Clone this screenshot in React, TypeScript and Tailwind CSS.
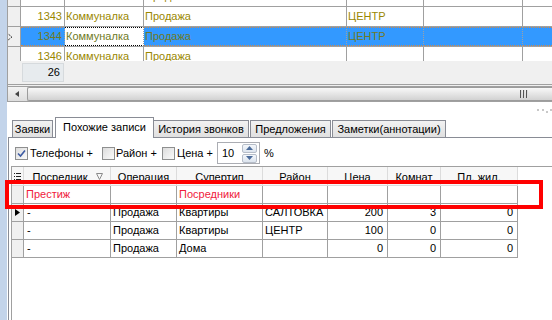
import React from "react";

const LINE = "border-[#a0a0a0]";

const TOP_ROWS = [
  { num: "", op: "Продажа", kind: "", area: "", partial: true },
  { num: "1343", kind: "Коммуналка", op: "Продажа", area: "ЦЕНТР" },
  { num: "1344", kind: "Коммуналка", op: "Продажа", area: "ЦЕНТР", selected: true },
  { num: "1346", kind: "Коммуналка", op: "Продажа", area: "" },
];

const COLS = [
  { w: "w-[87px]", title: "Посредник", right: false },
  { w: "w-[66px]", title: "Операция", right: false },
  { w: "w-[86px]", title: "Супертип", right: false },
  { w: "w-[65px]", title: "Район", right: false },
  { w: "w-[60px]", title: "Цена", right: true },
  { w: "w-[53px]", title: "Комнат", right: true },
  { w: "w-[77px]", title: "Пл. жил.", right: true },
];

const ROWS = [
  { red: true, cells: ["Престиж", "", "Посредники", "", "", "", ""] },
  { current: true, cells: ["-", "Продажа", "Квартиры", "САЛТОВКА", "200", "3", "0"] },
  { cells: ["-", "Продажа", "Квартиры", "ЦЕНТР", "100", "0", "0"] },
  { cells: ["-", "Продажа", "Дома", "", "0", "0", "0"] },
];

const TABS = [
  { label: "Заявки", cls: "ml-[5px] w-[41px]" },
  { label: "Похожие записи", cls: "ml-[2px] w-[99px]", active: true },
  { label: "История звонков", cls: "w-[95px] border-l-0" },
  { label: "Предложения", cls: "ml-[1px] w-[81px]" },
  { label: "Заметки(аннотации)", cls: "ml-[1px] w-[114px]" },
];

function TopRow({ row }: { row: (typeof TOP_ROWS)[number] }) {
  const sel = !!row.selected;
  const txt = sel ? "text-[#6f7a26]" : "text-[#9a8700]";
  const blue = sel ? "bg-[#3399ff] border-y border-dotted border-y-[#d08a4a]" : "";
  return (
    <div className={`flex h-[20px] shrink-0 border-b ${LINE} ${row.partial ? "-mt-[13px]" : ""}`}>
      <div className={`flex w-[13px] shrink-0 items-center border-r ${LINE} bg-[#f0f0f0]`}>
        {sel && (
          <svg width="6" height="8" viewBox="0 0 6 8" className="-ml-[1px]">
            <path d="M0.5 0.5 L5 4 L0.5 7.5 Z" fill="none" stroke="#000" strokeWidth="1" strokeDasharray="1 1" />
          </svg>
        )}
      </div>
      <div className={`flex w-[44px] shrink-0 items-center justify-end border-r ${LINE} pr-[2px] ${txt} ${blue}`}>
        {row.num}
      </div>
      <div
        className={`flex w-[79px] shrink-0 items-center border-r ${LINE} pl-[1px] ${txt} ${
          sel ? "border-y border-dotted border-y-black bg-white" : ""
        }`}
      >
        {row.kind}
      </div>
      <div className={`flex w-[203px] shrink-0 items-center border-r ${LINE} pl-[1px] ${txt} ${blue}`}>{row.op}</div>
      <div className={`flex w-[77px] shrink-0 items-center border-r ${LINE} pl-[1px] ${txt} ${blue}`}>{row.area}</div>
      <div className={`w-[99px] shrink-0 border-r ${LINE} ${blue}`} />
      <div className={`flex-1 ${blue}`} />
    </div>
  );
}

function CheckBox({ checked }: { checked?: boolean }) {
  return (
    <span className="flex h-[13px] w-[13px] shrink-0 items-center justify-center border border-[#8e8f8f] bg-gradient-to-br from-[#dcdcdc] to-[#fbfbfb]">
      {checked && (
        <svg width="9" height="9" viewBox="0 0 9 9">
          <path d="M1 4.5 L3.5 7 L8 1.5" fill="none" stroke="#3d5ba3" strokeWidth="1.6" />
        </svg>
      )}
    </span>
  );
}

export default function App() {
  return (
    <div className="relative flex h-[320px] w-[552px] overflow-hidden bg-white font-['Liberation_Sans',Arial,sans-serif] text-[11px] leading-none text-black">
      {/* left splitter strip */}
      <div className="w-[7px] shrink-0 bg-[#c3d4ea]" />

      <div className="flex min-w-0 flex-1 flex-col">
        {/* top grid */}
        <div className={`flex h-[102px] shrink-0 flex-col border-b border-l ${LINE}`}>
          <div className="flex h-[61px] shrink-0 flex-col overflow-hidden">
            {TOP_ROWS.map((r, i) => (
              <TopRow key={i} row={r} />
            ))}
          </div>
          <div className={`flex h-[24px] shrink-0 items-center border-b ${LINE} bg-[#f0f0f0]`}>
            <div className="ml-[14px] flex h-[19px] w-[42px] items-center justify-end border border-[#d6dadd] bg-[#e7ebee] pr-[3px]">
              26
            </div>
          </div>
          <div className="h-[1px] shrink-0 bg-[#f0f0f0]" />
          <div className={`flex h-[15px] shrink-0 border-t ${LINE} bg-gradient-to-b from-[#f3f3f3] to-[#dedede]`}>
            <div className="flex w-[18px] shrink-0 items-center justify-center">
              <svg width="4" height="6" viewBox="0 0 4 6">
                <path d="M4 0 L0 3 L4 6 Z" fill="#444" />
              </svg>
            </div>
            <div className="ml-[1px] flex flex-1 items-center rounded-l-[2px] border border-r-0 border-[#9c9c9c] bg-gradient-to-b from-[#f8f8f8] to-[#d2d2d2]">
              <svg width="10" height="8" viewBox="0 0 10 8" className="ml-[491px]">
                <rect x="1" y="0" width="1" height="8" fill="#555" />
                <rect x="4" y="0" width="1" height="8" fill="#555" />
                <rect x="7" y="0" width="1" height="8" fill="#555" />
                <rect x="2" y="0" width="1" height="8" fill="#ddd" />
                <rect x="5" y="0" width="1" height="8" fill="#ddd" />
                <rect x="8" y="0" width="1" height="8" fill="#ddd" />
              </svg>
            </div>
          </div>
        </div>

        {/* lower part */}
        <div className="flex h-[15px] shrink-0 items-center justify-end pt-[2px]">
          <svg width="16" height="6" viewBox="0 0 16 6">
            <rect x="1" y="1" width="2" height="2" fill="#c8c8c8" />
            <rect x="6" y="1" width="2" height="2" fill="#c8c8c8" />
            <rect x="10" y="3" width="2" height="2" fill="#c8c8c8" />
            <rect x="14" y="1" width="2" height="2" fill="#c8c8c8" />
          </svg>
        </div>

        <div className="flex h-[20px] shrink-0 items-end">
          {TABS.map((t) => (
            <div
              key={t.label}
              className={`flex items-center justify-center border border-b-0 border-[#898c95] ${t.cls} ${
                t.active
                  ? "relative z-10 -mb-px h-[21px] bg-white pb-[2px]"
                  : "h-[17px] bg-gradient-to-b from-[#f2f2f2] to-[#e0e0e0] pt-[1px]"
              }`}
            >
              {t.label}
            </div>
          ))}
        </div>

        <div className="ml-[1px] flex min-h-0 flex-1 flex-col border-l border-t border-[#898c95]">
          {/* filter row */}
          <div className="mt-[4px] flex h-[22px] shrink-0 items-center">
            <div className="ml-[6px] flex w-[87px] items-center gap-[2px]">
              <CheckBox checked />
              <span>Телефоны +</span>
            </div>
            <div className="flex w-[60px] items-center gap-[1px]">
              <CheckBox />
              <span>Район +</span>
            </div>
            <div className="flex w-[55px] items-center gap-[2px]">
              <CheckBox />
              <span>Цена +</span>
            </div>
            <div className="flex h-[22px] w-[43px] items-center border border-[#abadb3] bg-white">
              <span className="ml-[4px] flex-1">10</span>
              <div className="mr-[2px] flex h-[19px] w-[15px] flex-col gap-[1px]">
                <div className="flex flex-1 items-center justify-center rounded-[2px] border border-[#b6bdc8] bg-gradient-to-b from-[#f4f7fb] to-[#dce4ee]">
                  <svg width="7" height="4" viewBox="0 0 7 4">
                    <path d="M0 4 L3.5 0 L7 4 Z" fill="#4b6b9a" />
                  </svg>
                </div>
                <div className="flex flex-1 items-center justify-center rounded-[2px] border border-[#b6bdc8] bg-gradient-to-b from-[#f4f7fb] to-[#dce4ee]">
                  <svg width="7" height="4" viewBox="0 0 7 4">
                    <path d="M0 0 L3.5 4 L7 0 Z" fill="#4b6b9a" />
                  </svg>
                </div>
              </div>
            </div>
            <span className="ml-[4px]">%</span>
          </div>

          {/* lower grid */}
          <div className={`ml-[2px] mt-[2px] flex flex-1 flex-col border-l border-t ${LINE}`}>
            <div className="flex h-[19px] shrink-0">
              <div className="flex w-[12px] shrink-0 items-center justify-center border-b border-r border-[#dcdcdc] bg-[#f7f7f7]">
                <svg width="7" height="7" viewBox="0 0 7 7">
                  <rect x="0" y="0" width="1" height="1" fill="#222" />
                  <rect x="0" y="3" width="1" height="1" fill="#222" />
                  <rect x="0" y="6" width="1" height="1" fill="#222" />
                  <rect x="2" y="0" width="5" height="1" fill="#222" />
                  <rect x="2" y="3" width="5" height="1" fill="#222" />
                  <rect x="2" y="6" width="5" height="1" fill="#222" />
                </svg>
              </div>
              {COLS.map((c, i) => (
                <div
                  key={c.title}
                  className={`flex shrink-0 items-center border-b border-r border-[#dcdcdc] bg-[#f7f7f7] pt-[3px] ${c.w}`}
                >
                  <span className="flex-1 text-center">{c.title}</span>
                  {i === 0 && (
                    <svg width="7" height="7" viewBox="0 0 7 7" className="mr-[7px] -mt-[3px]">
                      <path d="M0.5 0.5 H6.5 L3.5 6.5 Z" fill="none" stroke="#8a8a8a" strokeWidth="1" />
                    </svg>
                  )}
                </div>
              ))}
            </div>
            {ROWS.map((r, ri) => (
              <div key={ri} className="flex h-[18px] shrink-0">
                <div className={`flex w-[12px] shrink-0 items-center border-b border-r ${LINE} bg-[#f0f0f0]`}>
                  {r.current && (
                    <svg width="5" height="7" viewBox="0 0 5 7" className="ml-[3px]">
                      <path d="M0 0 L5 3.5 L0 7 Z" fill="#000" />
                    </svg>
                  )}
                </div>
                {COLS.map((c, ci) => (
                  <div
                    key={ci}
                    className={`flex shrink-0 items-center border-b border-r ${LINE} ${c.w} ${
                      c.right ? "justify-end pr-[4px]" : "pl-[2px]"
                    } ${r.red ? "text-[#f0203c]" : ""}`}
                  >
                    {ci === 0 && r.cells[ci] === "-" ? <span className="ml-[1px]">-</span> : r.cells[ci]}
                  </div>
                ))}
              </div>
            ))}
          </div>
        </div>
      </div>

      {/* highlight frame */}
      <div className="pointer-events-none absolute left-[5px] top-[180px] h-[29px] w-[538px] border-[4px] border-[#ff0000]" />
    </div>
  );
}
